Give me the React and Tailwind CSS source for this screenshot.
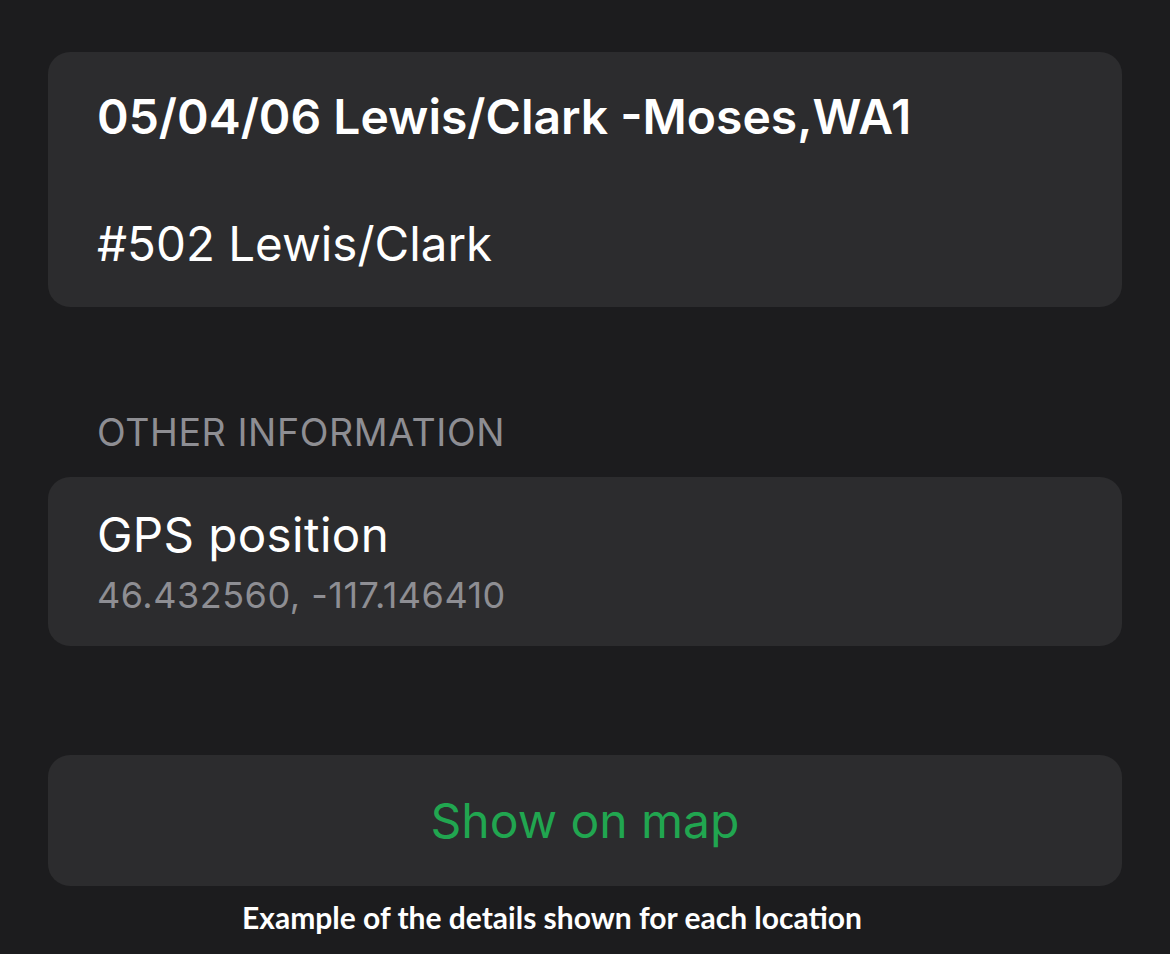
export default function App() {
  const ios = { fontFamily: 'Inter, "Noto Sans", sans-serif' }

  return (
    <div className="min-h-[954px] w-full bg-[#1c1c1e] pt-[52px]" style={ios}>
      <div className="px-[48px]">
        {/* Titre */}
        <div className="h-[255px] rounded-[22px] bg-[#2c2c2e] pl-[49px] pt-[36px]">
          <p className="text-[48px] font-semibold leading-[58px] text-white">05/04/06 Lewis/Clark -Moses,WA1</p>
          <p className="mt-[69px] text-[47.5px] leading-[58px] text-white">#502 Lewis/Clark</p>
        </div>

        {/* Other information */}
        <p className="mt-[106px] pl-[49px] text-[37.5px] leading-[40px] tracking-[0.6px] text-[#8e8e93]">OTHER INFORMATION</p>
        <div className="mt-[24px] h-[169px] rounded-[22px] bg-[#2c2c2e] pl-[49px] pt-[33px]">
          <p className="text-[47.5px] leading-[50px] tracking-[0.4px] text-white">GPS position</p>
          <p className="mt-[17px] text-[36px] leading-[36px] tracking-[0.5px] text-[#8e8e93]">46.432560, -117.146410</p>
        </div>

        {/* Show on map */}
        <div className="mt-[109px] flex h-[131px] items-center justify-center rounded-[22px] bg-[#2c2c2e]">
          <span className="text-[48px] text-[#21a650]">Show on map</span>
        </div>
      </div>

      <p className="mt-[13px] pr-[66px] text-center text-[30px] font-bold leading-[36px] text-white" style={{ fontFamily: 'Lato, "Open Sans", sans-serif' }}>
        Example of the details shown for each location
      </p>
    </div>
  )
}
